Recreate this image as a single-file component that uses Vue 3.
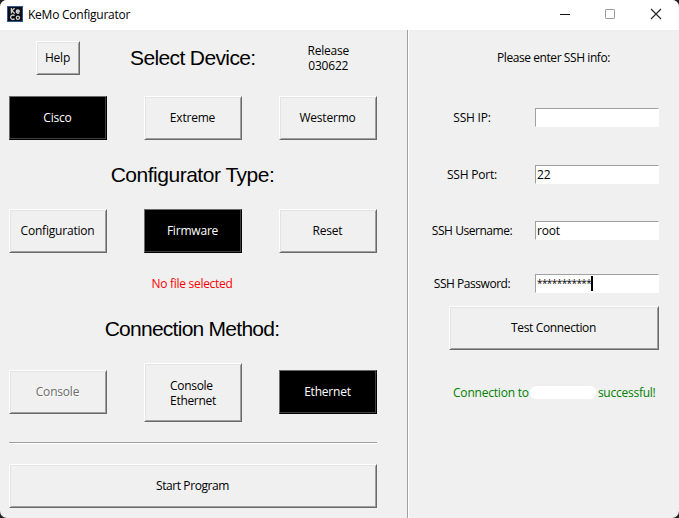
<script setup>
import { ref } from 'vue'

const device = ref('Cisco')
const type = ref('Firmware')
const method = ref('Ethernet')

const fields = [
  { label: 'SSH IP:', value: '', key: 'ip' },
  { label: 'SSH Port:', value: '22', key: 'port' },
  { label: 'SSH Username:', value: 'root', key: 'user' },
  { label: 'SSH Password:', value: '***********', key: 'pass', caret: true },
]
</script>

<template>
  <div class="backdrop">
    <div class="window">
      <header class="titlebar">
        <svg class="logo" width="16" height="16" viewBox="0 0 16 16">
          <rect width="16" height="16" fill="#2f5597" />
          <rect x="1" y="1" width="14" height="14" fill="#0b0d12" />
          <g fill="none" stroke="#d2d2d2" stroke-width="1.3">
            <path d="M4.4 2v5.6M7.6 2.2 4.8 4.8l3 2.8M9.3 5.5h3c0-2.1-3-2.1-3 0s2 2 3 1.3" />
            <path d="M7.6 9.5c-2-1.2-4 .1-4 1.8s2 3 4 1.6" />
            <circle cx="10.9" cy="11.7" r="1.6" />
          </g>
        </svg>
        <span class="title">KeMo Configurator</span>
        <svg class="controls" width="106" height="12" viewBox="0 0 106 12" fill="none">
          <path d="M0 6.5h10" stroke="#111" />
          <rect x="45.5" y="1.5" width="9" height="9" rx=".6" stroke="#9b9b9b" />
          <path d="m91 1 10 10M101 1 91 11" stroke="#222" stroke-width="1.1" />
        </svg>
      </header>

      <main class="content">
        <section class="left">
          <div class="row head">
            <button class="btn help">Help</button>
            <h2 class="heading select">Select Device:</h2>
            <p class="release">Release<br />030622</p>
          </div>
          <div class="row devices">
            <button v-for="d in ['Cisco', 'Extreme', 'Westermo']" :key="d" class="btn" :class="{ on: device === d }" @click="device = d">{{ d }}</button>
          </div>
          <h2 class="heading type">Configurator Type:</h2>
          <div class="row">
            <button v-for="t in ['Configuration', 'Firmware', 'Reset']" :key="t" class="btn" :class="{ on: type === t }" @click="type = t">{{ t }}</button>
          </div>
          <p class="nofile">No file selected</p>
          <h2 class="heading method">Connection Method:</h2>
          <div class="row methods">
            <button class="btn" disabled>Console</button>
            <button class="btn tall" :class="{ on: method === 'Both' }" @click="method = 'Both'"><span class="lines">Console<br />Ethernet</span></button>
            <button class="btn" :class="{ on: method === 'Ethernet' }" @click="method = 'Ethernet'">Ethernet</button>
          </div>
          <div class="rule"></div>
          <button class="btn start">Start Program</button>
        </section>

        <section class="right">
          <p class="prompt">Please enter SSH info:</p>
          <div v-for="f in fields" :key="f.key" class="field" :class="f.key">
            <span class="label">{{ f.label }}</span>
            <span class="entry"><span class="value">{{ f.value }}</span><i v-if="f.caret" class="caret"></i></span>
          </div>
          <button class="btn test">Test Connection</button>
          <p class="result"><span>Connection to</span><i class="blank"></i><span class="ok">successful!</span></p>
        </section>
      </main>
    </div>
  </div>
</template>

<style>
body { margin: 0; overflow: hidden; }
</style>

<style scoped>
* { box-sizing: border-box; }
.backdrop { width: 679px; height: 518px; background: #222; }
.window {
  width: 679px; height: 518px; border-radius: 7px; overflow: hidden;
  background: #f0f0f0; color: #000;
  font: 12px/15px "Open Sans", "Noto Sans", sans-serif;
  letter-spacing: -0.2px;
}
p, h2 { margin: 0; font-weight: 400; }
.titlebar { height: 30px; background: #fff; display: flex; align-items: center; padding: 0 13px 0 7px; }
.logo { margin-top: -2px; }
.title { margin: -1px auto 0 5px; letter-spacing: -0.24px; }
.controls { margin-top: -2px; }
.content { display: flex; height: 488px; }
.left { width: 409px; padding: 0 30px 0 9px; border-right: 1px solid #fff; box-shadow: inset -1px 0 #a0a0a0; }
.row { display: flex; gap: 37px; align-items: center; width: 368px; }
.head { height: 56px; margin-bottom: 10px; gap: 0; }
.btn {
  width: 98px; height: 44px; padding: 0 1px 2px 0; flex: none; display: flex; align-items: center; justify-content: center;
  font: inherit; letter-spacing: inherit; color: #000; background: #f0f0f0; border-radius: 0;
  border: 1px solid; border-color: #fff #696969 #696969 #fff;
  box-shadow: inset 1px 1px #e3e3e3, inset -1px -1px #a0a0a0;
}
.btn.on { background: #000; color: #fff; border-color: #696969 #000 #000 #696969; box-shadow: inset -1px -1px #404040; }
.btn:disabled { color: #6d6d6d; text-shadow: 1px 1px #fff; }
.help { width: 44px; height: 34px; margin-left: 27px; }
.heading { font: 21px/28px "Liberation Sans", Arial, sans-serif; text-align: center; letter-spacing: -0.48px; white-space: nowrap; width: 367px; }
.select { width: 126px; margin-left: 50px; letter-spacing: -0.62px; }
.release { width: 98px; margin-left: 24px; text-align: center; }
.type { height: 69px; line-height: 70px; }
.nofile { height: 62px; line-height: 62px; width: 366px; text-align: center; color: #f00; letter-spacing: -0.28px; }
.method { letter-spacing: -0.74px; width: 366px; }
.methods { height: 99px; }
.methods .btn { margin-bottom: 1px; }
.methods .tall { height: 59px; margin-bottom: 0; padding: 0; }
.lines { text-align: left; letter-spacing: -0.3px; }
.rule { width: 368px; height: 2px; background: #fff; border-top: 1px solid #a0a0a0; margin-bottom: 20px; }
.start { width: 368px; letter-spacing: -0.42px; }
.right { width: 270px; padding: 0 20px; }
.prompt { height: 56px; line-height: 56px; text-align: center; margin: 0 0 22px 19px; width: 211px; letter-spacing: -0.42px; }
.field { display: flex; height: 19px; align-items: center; }
.label { width: 86px; text-align: center; white-space: nowrap; letter-spacing: -0.46px; }
.entry { width: 124px; height: 19px; margin-left: 20px; background: #fff; border: 1px solid; border-color: #a0a0a0 #fff #fff #a0a0a0; padding-left: 1px; display: flex; align-items: center; }
.ip { margin-bottom: 38px; }
.ip .label, .port .label { letter-spacing: -0.2px; }
.port { margin-bottom: 37px; }
.user { margin-bottom: 34px; }
.pass { margin-bottom: 13px; }
.pass .value { font-size: 10px; letter-spacing: -0.58px; }
.caret { width: 2px; height: 15px; background: #000; }
.test { width: 210px; margin-left: 20px; margin-bottom: 35px; letter-spacing: -0.36px; }
.result { display: flex; align-items: center; color: #008000; margin-left: 24px; white-space: nowrap; }
.blank { width: 66px; height: 13px; border-radius: 6px; background: #fff; margin: 0 2px 0 1px; }
.ok { letter-spacing: -0.25px; }
</style>
